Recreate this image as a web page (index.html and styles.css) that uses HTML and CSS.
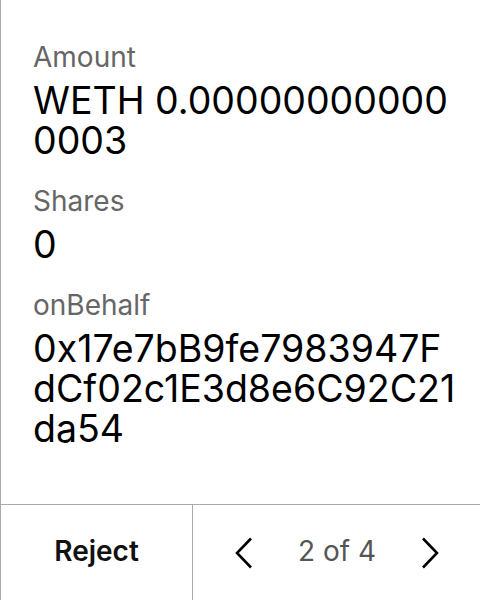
FILE: index.html
```html
<!DOCTYPE html>
<html>
<head>
<meta charset="utf-8">
<link rel="stylesheet" href="styles.css">
</head>
<body>
<div class="screen">
  <div class="content">
    <div class="field">
      <div class="label">Amount</div>
      <div class="value">WETH 0.000000000000003</div>
    </div>
    <div class="field">
      <div class="label">Shares</div>
      <div class="value">0</div>
    </div>
    <div class="field">
      <div class="label">onBehalf</div>
      <div class="value">0x17e7bB9fe7983947FdCf02c1E3d8e6C92C21da54</div>
    </div>
  </div>
  <div class="footer">
    <div class="reject">Reject</div>
    <div class="pager">
      <svg class="chev" width="18" height="32" viewBox="0 0 18 32"><path d="M16 1.5 L2 16 L16 30.5" fill="none" stroke="#000" stroke-width="2.6"/></svg>
      <span class="count">2 of 4</span>
      <svg class="chev" width="18" height="32" viewBox="0 0 18 32"><path d="M2 1.5 L16 16 L2 30.5" fill="none" stroke="#000" stroke-width="2.6"/></svg>
    </div>
  </div>
</div>
</body>
</html>
```
FILE: styles.css
```css
html, body {
  margin: 0;
  padding: 0;
  background: #fff;
}
body {
  font-family: Inter, "Noto Sans", sans-serif;
  width: 480px;
  height: 600px;
  overflow: hidden;
}
.screen {
  display: flex;
  flex-direction: column;
  height: 600px;
  border-left: 1px solid #aaa;
  box-sizing: border-box;
}
.content {
  flex: 1;
  padding: 40px 21px 0 32px;
  display: flex;
  flex-direction: column;
  gap: 23px;
  border-bottom: 1px solid #aaa;
}
.label {
  font-size: 28px;
  line-height: 34px;
  color: #666;
  margin-bottom: 7px;
}
.value {
  font-size: 37.5px;
  line-height: 40px;
  color: #000;
  word-break: break-all;
}
.footer {
  height: 95px;
  display: flex;
}
.reject {
  width: 191px;
  border-right: 1px solid #aaa;
  display: flex;
  align-items: center;
  justify-content: center;
  font-size: 28px;
  font-weight: 600;
  color: #111;
  padding-bottom: 3px;
}
.pager {
  flex: 1;
  display: flex;
  align-items: center;
  justify-content: space-between;
  padding: 0 41px 0 42px;
}
.count {
  font-size: 28px;
  color: #555;
  padding-bottom: 3px;
}
.chev {
  display: block;
}
```
